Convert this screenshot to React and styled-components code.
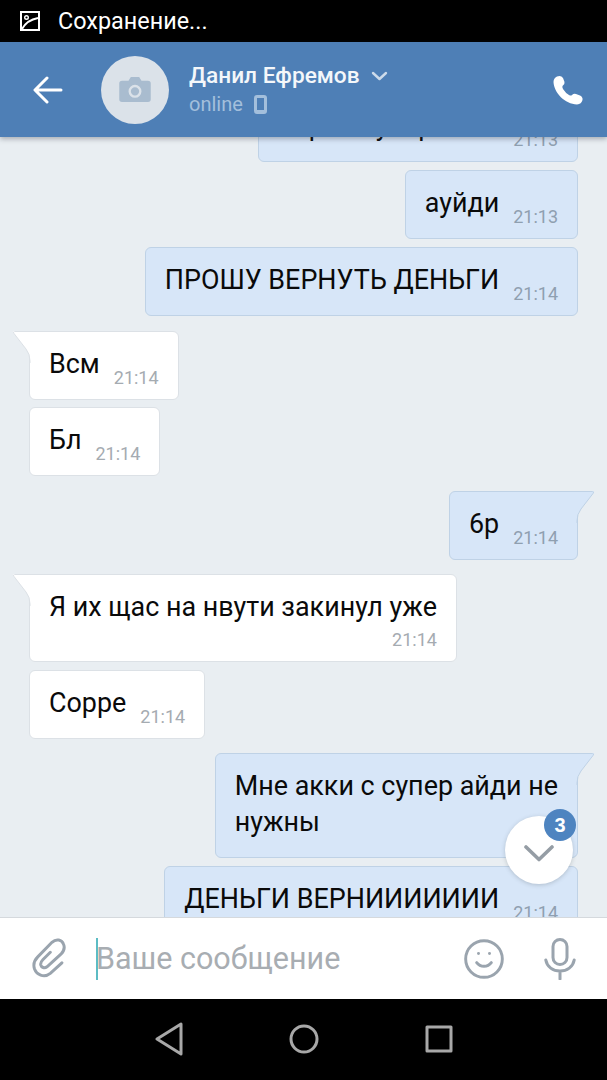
import React from 'react'
import styled, { createGlobalStyle } from 'styled-components'
import { Smile } from 'lucide-react'

const GlobalStyle = createGlobalStyle`
  html, body {
    margin: 0;
    padding: 0;
    background: #000;
  }
  * {
    box-sizing: border-box;
  }
`

const Screen = styled.div`
  width: 607px;
  height: 1080px;
  display: flex;
  flex-direction: column;
  position: relative;
  overflow: hidden;
  font-family: Roboto, 'Liberation Sans', sans-serif;
`

const StatusBar = styled.div`
  height: 42px;
  flex: none;
  background: #000;
  color: #fff;
  display: flex;
  align-items: center;
  gap: 18px;
  padding-left: 20px;
  font-size: 23.4px;
`

const Header = styled.header`
  height: 95px;
  flex: none;
  background: #4e7fb6;
  display: flex;
  align-items: center;
  padding: 0 24px 0 33px;
  position: relative;
  z-index: 2;
  box-shadow: 0 2px 5px rgba(40, 50, 60, 0.35);
`

const Avatar = styled.div`
  width: 68px;
  height: 68px;
  border-radius: 50%;
  background: #dbe2e9;
  margin-left: 38px;
  display: flex;
  align-items: center;
  justify-content: center;
`

const Peer = styled.div`
  margin-left: 20px;
  flex: 1;
  display: flex;
  flex-direction: column;
  gap: 3px;
`

const PeerName = styled.div`
  display: flex;
  align-items: center;
  gap: 11px;
  color: #f4f7fa;
  font-size: 22.7px;
  font-weight: 500;
  line-height: 26px;
`

const PeerStatus = styled.div`
  display: flex;
  align-items: center;
  gap: 11px;
  color: #a3bfdc;
  font-size: 20px;
  line-height: 24px;
`

const Chat = styled.main`
  flex: 1;
  min-height: 0;
  background: #e9eef2;
  overflow: hidden;
  position: relative;
`

const Feed = styled.div`
  display: flex;
  flex-direction: column;
  margin-top: -44px;
  padding: 0 29px;
`

const Bubble = styled.div`
  align-self: ${(props) => (props.$out ? 'flex-end' : 'flex-start')};
  position: relative;
  margin-top: ${(props) => props.$gap}px;
  padding: 14px 19px 17px 19px;
  background: ${(props) => (props.$out ? '#d7e6f8' : '#fff')};
  border: 1px solid ${(props) => (props.$out ? '#bfd2e6' : '#dce1e6')};
  border-radius: 6px;
  ${(props) => props.$tail && (props.$out ? 'border-top-right-radius: 0;' : 'border-top-left-radius: 0;')}
  color: #0a0a0a;
  font-size: 26.9px;
  line-height: 36px;
  display: flex;
  flex-direction: ${(props) => (props.$stack ? 'column' : 'row')};
  gap: ${(props) => (props.$stack ? '5px' : '14px')};
`

const Body = styled.div`
  white-space: pre;
`

const Time = styled.span`
  align-self: flex-end;
  font-size: 18px;
  line-height: 20px;
  color: ${(props) => (props.$out ? '#8f9fb0' : '#a5abb1')};
  margin-bottom: -6px;
`

const Tail = styled.svg`
  position: absolute;
  top: -1px;
  width: 19px;
  height: 32px;
  ${(props) => (props.$out ? 'right: -18px; transform: scaleX(-1);' : 'left: -18px;')}
`

const ScrollDown = styled.button`
  position: absolute;
  left: 505px;
  top: 679px;
  width: 68px;
  height: 68px;
  border: none;
  border-radius: 50%;
  background: #fff;
  box-shadow: 0 1px 4px rgba(60, 70, 80, 0.25);
  display: flex;
  align-items: center;
  justify-content: center;
  padding: 6px 0 0;
`

const Badge = styled.span`
  position: absolute;
  top: -7px;
  right: -3px;
  width: 32px;
  height: 32px;
  border-radius: 50%;
  background: #4e84c0;
  color: #fff;
  font-size: 20px;
  font-weight: 700;
  line-height: 32px;
  text-align: center;
`

const Composer = styled.div`
  height: 82px;
  flex: none;
  background: #fff;
  border-top: 1px solid #d5d9dd;
  display: flex;
  align-items: center;
  padding: 0 31px;
  color: #9aa4ae;
`

const InputText = styled.div`
  flex: 1;
  margin-left: 29px;
  height: 42px;
  display: flex;
  align-items: center;
  box-shadow: inset 2px 0 #5cbcc4;
  color: #a8adb2;
  font-size: 30.5px;
`

const ComposerActions = styled.div`
  display: flex;
  align-items: center;
  gap: 38px;
`

const NavBar = styled.nav`
  height: 81px;
  flex: none;
  background: #000;
  display: flex;
  align-items: center;
  justify-content: center;
  gap: 106px;
  padding: 0 0 2px 1px;
`

const messages = [
  { id: 1, out: true, gap: 0, text: 'Верни супер акки', time: '21:13' },
  { id: 2, out: true, gap: 8, text: 'ауйди', time: '21:13' },
  { id: 3, out: true, gap: 8, text: 'ПРОШУ ВЕРНУТЬ ДЕНЬГИ', time: '21:14' },
  { id: 4, out: false, gap: 15, tail: true, text: 'Всм', time: '21:14' },
  { id: 5, out: false, gap: 7, text: 'Бл', time: '21:14' },
  { id: 6, out: true, gap: 15, tail: true, text: '6р', time: '21:14' },
  { id: 7, out: false, gap: 14, tail: true, stack: true, text: 'Я их щас на нвути закинул уже', time: '21:14' },
  { id: 8, out: false, gap: 8, text: 'Сорре', time: '21:14' },
  { id: 9, out: true, gap: 14, tail: true, stack: true, text: 'Мне акки с супер айди не\nнужны' },
  { id: 10, out: true, gap: 8, text: 'ДЕНЬГИ ВЕРНИИИИИИИ', time: '21:14' },
]

function Message({ message }) {
  const { out, gap, tail, stack, text, time } = message
  const fill = out ? '#d7e6f8' : '#fff'
  const edge = out ? '#bfd2e6' : '#dce1e6'
  return (
    <Bubble $out={out} $gap={gap} $stack={stack} $tail={tail}>
      {tail && (
        <Tail $out={out} viewBox="0 0 19 32">
          <path d="M19 0H2Q0 0 1.500 2L14 18Q18 23 18 30V32H19Z" fill={fill} />
          <path d="M19 0.500H2.500Q0.500 0.500 2 2.500L14 18Q18 23 18 30V32" fill="none" stroke={edge} />
        </Tail>
      )}
      <Body>{text}</Body>
      {time && <Time $out={out}>{time}</Time>}
    </Bubble>
  )
}

function App() {
  return (
    <Screen>
      <GlobalStyle />
      <StatusBar>
        <svg width="20" height="20" viewBox="0 0 20 20" fill="none" stroke="#fff" strokeWidth="2">
          <rect x="1" y="1" width="18" height="18" />
          <path d="M2 18Q7 9 18 7" />
          <circle cx="6.500" cy="6.500" r="1.800" strokeWidth="1.400" />
        </svg>
        Сохранение...
      </StatusBar>
      <Header>
        <svg width="30" height="28" viewBox="0 0 30 28" fill="none" stroke="#fff" strokeWidth="3" strokeLinecap="round" strokeLinejoin="round">
          <path d="M28 14H3M14 2L2 14L14 26" />
        </svg>
        <Avatar>
          <svg width="32" height="25" viewBox="0 0 34 27">
            <path
              fill="#a9bccf"
              fillRule="evenodd"
              d="M3 4h7l2.500-4h9l2.500 4h7a3 3 0 0 1 3 3v17a3 3 0 0 1-3 3H3a3 3 0 0 1-3-3V7a3 3 0 0 1 3-3zM17 8.500a7 7 0 1 0 0 14a7 7 0 0 0 0-14zM17 11a4.500 4.500 0 1 1 0 9a4.500 4.500 0 0 1 0-9z"
            />
          </svg>
        </Avatar>
        <Peer>
          <PeerName>
            Данил Ефремов
            <svg width="17" height="10" viewBox="0 0 17 10" fill="none" stroke="#cddbea" strokeWidth="2.400" strokeLinecap="round" strokeLinejoin="round">
              <path d="M2 2l6.500 6L15 2" />
            </svg>
          </PeerName>
          <PeerStatus>
            online
            <svg width="13" height="19" viewBox="0 0 13 19" fill="none">
              <rect x="0" y="0" width="13" height="19" rx="3" fill="#a3bfdc" />
              <rect x="3" y="3" width="7" height="12" fill="#4e7fb6" />
            </svg>
          </PeerStatus>
        </Peer>
        <svg width="30" height="30" viewBox="0 0 30 30">
          <path
            fill="#fff"
            d="M4 1.500Q8 0 10 3L11.500 7Q12 9.500 9.500 11Q9 12 10 14Q12.500 18 16 20Q18 21 19 20Q21 18 23 19L27 20.500Q30 22 29.500 25Q28.500 29 24 29.500C12 29 1 18 0.500 7Q0.500 3 4 1.500Z"
          />
        </svg>
      </Header>
      <Chat>
        <Feed>
          {messages.map((message) => (
            <Message key={message.id} message={message} />
          ))}
        </Feed>
        <ScrollDown aria-label="Вниз">
          <svg width="30" height="17" viewBox="0 0 30 17" fill="none" stroke="#959da5" strokeWidth="3.600" strokeLinecap="round" strokeLinejoin="round">
            <path d="M2 2l13 12.500L28 2" />
          </svg>
          <Badge>3</Badge>
        </ScrollDown>
      </Chat>
      <Composer>
        <svg width="36" height="43" viewBox="32 22 108 130" fill="none" stroke="#9aa4ae" strokeWidth="9" strokeLinecap="round">
          <path d="M125 100L90 132C70 148 48 135 42 118C37 102 42 92 52 82L95 38C108 26 125 30 130 44C135 56 130 66 122 74L80 112C72 118 63 114 61 106C60 100 63 95 68 90L90 68" />
        </svg>
        <InputText>Ваше сообщение</InputText>
        <ComposerActions>
          <Smile size={44} strokeWidth={1.600} />
          <svg width="32" height="42" viewBox="0 0 32 42" fill="none" stroke="currentColor" strokeWidth="3" strokeLinecap="round">
            <rect x="9" y="1.500" width="14" height="25" rx="7" />
            <path d="M1.800 22C3 29 9 33 16 33S29 29 30.200 22M16 33v8" />
          </svg>
        </ComposerActions>
      </Composer>
      <NavBar>
        <svg width="28" height="34" viewBox="0 0 28 34" fill="none" stroke="#a8a8a8" strokeWidth="3" strokeLinejoin="round">
          <path d="M26 2V32L2 17Z" />
        </svg>
        <svg width="30" height="30" viewBox="0 0 30 30" fill="none" stroke="#a8a8a8" strokeWidth="3">
          <circle cx="15" cy="15" r="13" />
        </svg>
        <svg width="28" height="28" viewBox="0 0 28 28" fill="none" stroke="#a8a8a8" strokeWidth="3" strokeLinejoin="round">
          <rect x="2" y="2" width="24" height="24" />
        </svg>
      </NavBar>
    </Screen>
  )
}

export default App
